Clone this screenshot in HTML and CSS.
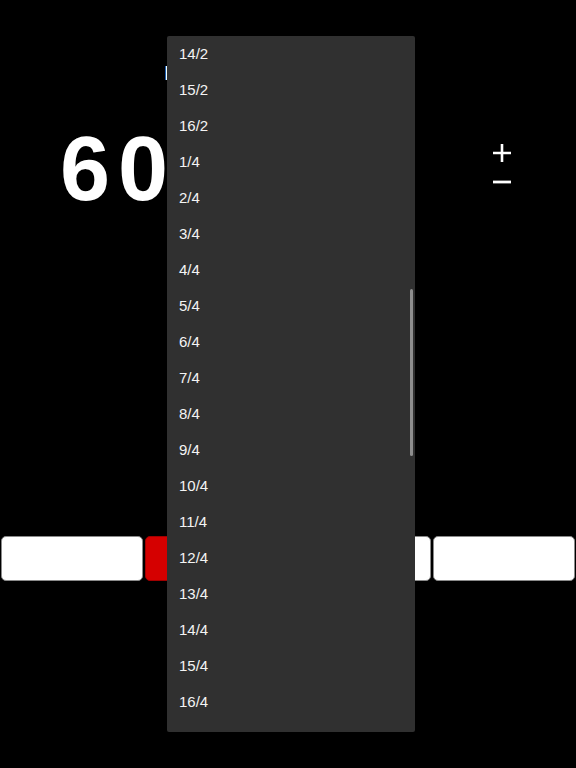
FILE: index.html
```html
<!DOCTYPE html>
<html>
<head>
<meta charset="utf-8">
<link rel="stylesheet" href="styles.css">
</head>
<body>
<main class="app">
  <div class="label">BPM</div>
  <div class="tempo-row">
    <div class="tempo">60</div>
    <div class="steppers">
      <svg class="step" width="18" height="18" viewBox="0 0 18 18"><path d="M9 0V18M0 9H18" stroke="#fff" stroke-width="2.6" fill="none"/></svg>
      <svg class="step minus" width="18" height="6" viewBox="0 0 18 6"><path d="M0 3H18" stroke="#fff" stroke-width="2.8" fill="none"/></svg>
    </div>
  </div>
  <div class="buttons">
    <div class="cell"><div class="btn"></div></div>
    <div class="cell"><div class="btn red"></div></div>
    <div class="cell"><div class="btn"></div></div>
    <div class="cell"><div class="btn"></div></div>
  </div>
</main>
<div class="menu">
  <ul class="list">
    <li>14/2</li><li>15/2</li><li>16/2</li>
    <li>1/4</li><li>2/4</li><li>3/4</li><li>4/4</li><li>5/4</li><li>6/4</li><li>7/4</li><li>8/4</li>
    <li>9/4</li><li>10/4</li><li>11/4</li><li>12/4</li><li>13/4</li><li>14/4</li><li>15/4</li><li>16/4</li><li>17/4</li>
  </ul>
  <div class="thumb"></div>
</div>
</body>
</html>
```
FILE: styles.css
```css
html, body {
  margin: 0;
  padding: 0;
  background: #000;
  height: 768px;
  overflow: hidden;
}
body {
  font-family: "Liberation Sans", Arial, sans-serif;
  color: #fff;
}
.app {
  padding-top: 61px;
}
.label {
  padding-left: 164px;
  font-size: 21px;
  line-height: 24px;
  height: 24px;
  white-space: nowrap;
}
.tempo-row {
  margin-top: 38px;
  height: 93px;
  display: flex;
}
.tempo {
  padding-left: 60px;
  font-size: 90px;
  font-weight: bold;
  line-height: 92px;
  letter-spacing: 8px;
  width: 300px;
}
.steppers {
  margin-left: 133px;
  padding-top: 21px;
  display: flex;
  flex-direction: column;
}
.step { display: block; }
.minus { margin-top: 17px; }
.buttons {
  margin-top: 320px;
  display: grid;
  grid-template-columns: repeat(4, 144px);
}
.cell {
  padding: 0 1px;
}
.btn {
  height: 43px;
  background: #fff;
  border: 1px solid #8a8a8a;
  border-radius: 5px;
}
.btn.red {
  background: #d50000;
  border-color: #a00000;
}
.menu {
  position: absolute;
  left: 167px;
  top: 36px;
  width: 248px;
  height: 696px;
  background: #303030;
  border-radius: 2px;
  overflow: hidden;
}
.list {
  list-style: none;
  margin: 0;
  padding: 0;
}
.list li {
  height: 36px;
  line-height: 36px;
  padding-left: 12px;
  font-size: 15px;
  color: #f4f4f4;
}
.thumb {
  position: absolute;
  left: 243px;
  top: 253px;
  width: 3px;
  height: 167px;
  background: #8e8e8e;
  border-radius: 2px;
}
```
